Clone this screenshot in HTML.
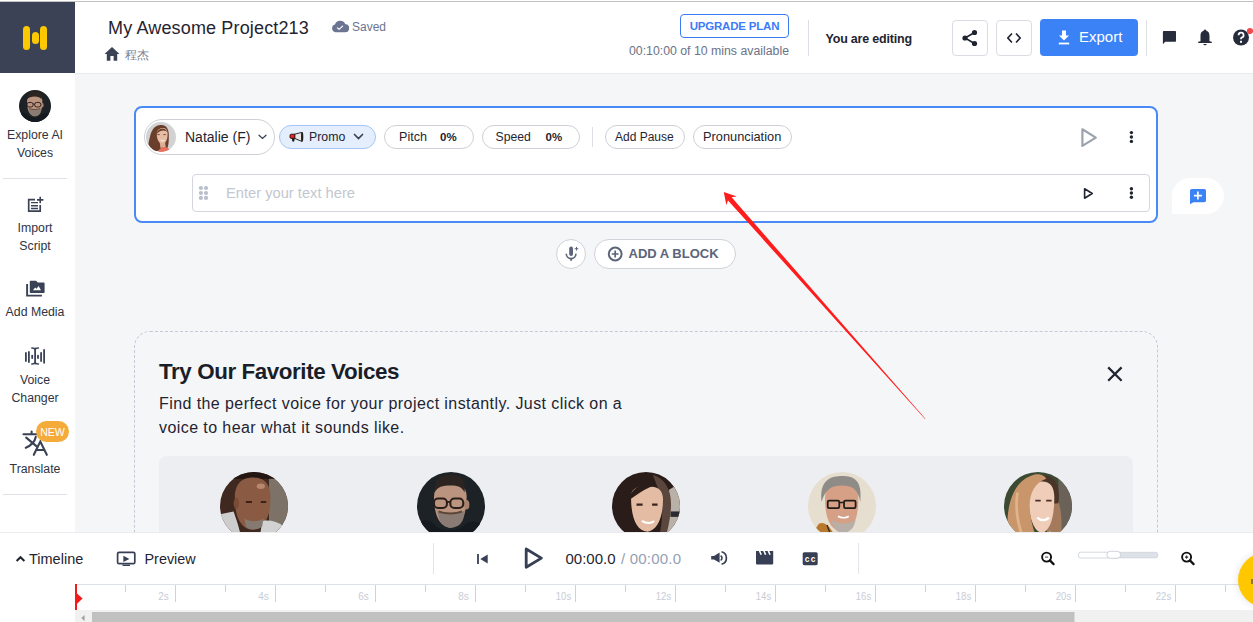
<!DOCTYPE html>
<html><head><meta charset="utf-8">
<style>
*{box-sizing:border-box;margin:0;padding:0}
html,body{width:1253px;height:622px;overflow:hidden;background:#f5f6f8;font-family:"Liberation Sans",sans-serif;color:#1f2430}
.abs{position:absolute}
#topline{position:absolute;left:0;top:0;width:1253px;height:2px;background:#fff}
#topline2{position:absolute;left:0;top:1px;width:1253px;height:1px;background:#c2c2c2;z-index:2}
#logo{position:absolute;left:0;top:2px;width:75px;height:71px;background:#3b4256}
#header{position:absolute;left:75px;top:2px;width:1178px;height:72px;background:#fff;border-bottom:1px solid #ebebed}
#sidebar{position:absolute;left:0;top:73px;width:75px;height:459px;background:#fff}
.sbt{position:absolute;left:0;width:70px;text-align:center;font-size:12.3px;line-height:18px;color:#2f3442}
.div{position:absolute;left:3px;width:64px;height:1px;background:#dfe1e6}
.pill{position:absolute;border:1px solid #cfd2d8;border-radius:14px;background:#fff;font-size:13px;color:#1f2430}
#bottom{position:absolute;left:0;top:532px;width:1253px;height:90px;background:#fff;overflow:hidden}
</style></head><body>
<div id="topline"></div><div id="topline2"></div>
<div id="logo">
  <div class="abs" style="left:23px;top:24px;width:7px;height:24px;border-radius:4px;background:#fcc800"></div>
  <div class="abs" style="left:31.5px;top:30px;width:7px;height:12px;border-radius:4px;background:#fcc800"></div>
  <div class="abs" style="left:40px;top:24px;width:7px;height:24px;border-radius:4px;background:#fcc800"></div>
</div>
<div id="header"></div>
<!-- header content -->
<div class="abs" style="left:108px;top:17px;font-size:18px;line-height:22px;color:#1f2430;letter-spacing:0.15px;white-space:nowrap">My Awesome Project213</div>
<svg class="abs" style="left:331px;top:19px" width="18" height="14" viewBox="0 0 18 14"><path d="M4.5 13.3 A4 4 0 0 1 4 5.5 A5.5 5.5 0 0 1 14.2 5.1 A4.1 4.1 0 0 1 14 13.3 Z" fill="#6b7490"/><path d="M6.4 8.9 L8.1 10.4 L11.6 7.1" stroke="#fff" stroke-width="1.2" fill="none" stroke-linecap="round" stroke-linejoin="round"/></svg>
<div class="abs" style="left:352px;top:20px;font-size:12px;line-height:15px;color:#6b7490">Saved</div>
<svg class="abs" style="left:104px;top:47px" width="16" height="14" viewBox="0 0 16 14"><path d="M8 0 L15.5 7 L13.2 7 L13.2 13.8 L9.6 13.8 L9.6 9 L6.4 9 L6.4 13.8 L2.8 13.8 L2.8 7 L0.5 7 Z" fill="#3a4255"/></svg>
<div class="abs" style="left:125px;top:48px;font-size:12px;line-height:15px;color:#7c8598">程杰</div>
<div class="abs" style="left:680px;top:14px;width:109px;height:24px;border:1px solid #3b7cf5;border-radius:4px;color:#3b7cf5;font-size:11.5px;font-weight:700;line-height:22px;text-align:center;letter-spacing:-0.2px">UPGRADE PLAN</div>
<div class="abs" style="left:629px;top:44px;font-size:12.3px;line-height:14px;color:#6b7386;white-space:nowrap">00:10:00 of 10 mins available</div>
<div class="abs" style="left:808px;top:20px;width:1px;height:36px;background:#dcdfe4"></div>
<div class="abs" style="left:825.5px;top:31.5px;font-size:12.5px;font-weight:700;line-height:15px;color:#1f2430;white-space:nowrap;letter-spacing:-0.2px">You are editing</div>
<div class="abs" style="left:952px;top:20px;width:36px;height:36px;border:1px solid #d9dce2;border-radius:4px;background:#fff"></div>
<svg class="abs" style="left:961px;top:29px" width="18" height="18" viewBox="0 0 18 18"><circle cx="13.5" cy="3.5" r="2.6" fill="#1f2430"/><circle cx="4" cy="9" r="2.6" fill="#1f2430"/><circle cx="13.5" cy="14.5" r="2.6" fill="#1f2430"/><path d="M13.5 3.5 L4 9 L13.5 14.5" stroke="#1f2430" stroke-width="1.6" fill="none"/></svg>
<div class="abs" style="left:996px;top:20px;width:36px;height:36px;border:1px solid #d9dce2;border-radius:4px;background:#fff"></div>
<svg class="abs" style="left:1006px;top:31px" width="16" height="14" viewBox="0 0 16 14"><path d="M5.5 3 L1.8 7 L5.5 11 M10.5 3 L14.2 7 L10.5 11" stroke="#1f2430" stroke-width="1.7" fill="none" stroke-linecap="round" stroke-linejoin="round"/></svg>
<div class="abs" style="left:1040px;top:19px;width:98px;height:37px;border-radius:4px;background:#3a82f6"></div>
<svg class="abs" style="left:1058px;top:30px" width="12" height="15" viewBox="0 0 12 15"><path d="M4 0.5 H8 V5.5 H11 L6 10.5 L1 5.5 H4 Z" fill="#fff"/><rect x="0.8" y="12.6" width="10.4" height="1.8" fill="#fff"/></svg>
<div class="abs" style="left:1079px;top:28px;font-size:15px;line-height:18px;color:#fff">Export</div>
<div class="abs" style="left:1146px;top:20px;width:1px;height:36px;background:#dcdfe4"></div>
<svg class="abs" style="left:1162px;top:30px" width="15" height="15" viewBox="0 0 15 15"><path d="M1.8 1 H13.2 Q14 1 14 1.8 V10.9 Q14 11.7 13.2 11.7 H3.2 L0.9 14.3 V1.8 Q0.9 1 1.8 1 Z" fill="#262c3b"/></svg>
<svg class="abs" style="left:1197px;top:29px" width="16" height="18" viewBox="0 0 16 18"><circle cx="8" cy="1.6" r="1.1" fill="#262c3b"/><path d="M8 1.6 C5 1.6 3.5 4 3.5 7 V12.2 L1.2 12.8 V13.9 H14.8 V12.8 L12.5 12.2 V7 C12.5 4 11 1.6 8 1.6 Z" fill="#262c3b"/><path d="M5.8 15 H10.2 L8 16.6 Z" fill="#262c3b"/></svg>
<svg class="abs" style="left:1232px;top:27px" width="21" height="19" viewBox="0 0 21 19"><circle cx="9" cy="10.5" r="8" fill="#262c3b"/><path d="M6.6 8.2 A2.5 2.5 0 1 1 9.5 10.6 C9 10.9 9 11.4 9 12.3" stroke="#fff" stroke-width="1.8" fill="none" stroke-linecap="butt"/><rect x="8" y="13.8" width="2" height="2" fill="#fff"/><circle cx="18" cy="4" r="3.1" fill="#f4484a"/></svg>
<div id="sidebar"></div>
<!-- sidebar -->
<svg class="abs" style="left:19px;top:90px" width="32" height="32" viewBox="-50 -50 100 100"><defs><clipPath id="avglasses35"><circle r="50"/></clipPath></defs><g clip-path="url(#avglasses35)"><rect x="-50" y="-50" width="100" height="100" fill="#1c2225"/><path d="M-25 -14 C-25 -30 -12 -34 -1 -34 C14 -34 23 -28 23 -14 C23 12 16 30 -1 32 C-18 30 -25 12 -25 -14Z" fill="#bb9480"/><path d="M-24 -20 C-26 -42 -12 -46 -1 -46 C16 -46 22 -40 20 -20 C16 -28 10 -30 -1 -30 C-12 -30 -20 -28 -24 -20Z" fill="#2b2421"/><ellipse cx="23" cy="-2" rx="4" ry="7" fill="#a88470"/><path d="M-20 6 C-18 28 -8 32 -1 32 C10 32 20 26 20 6 C12 14 -12 14 -20 6Z" fill="#8a7c74"/><path d="M-18 8 C-10 12 8 12 16 8" stroke="#5a4638" stroke-width="3" fill="none"/><path d="M-50 50 L-46 24 C-38 18 -28 22 -22 30 C-12 38 10 38 20 28 C28 20 40 22 46 28 L50 50Z" fill="#141a1f"/><rect x="-25" y="-11" width="19" height="14" rx="6" fill="none" stroke="#2a1e1a" stroke-width="3"/><rect x="-1" y="-11" width="19" height="14" rx="6" fill="none" stroke="#2a1e1a" stroke-width="3"/><path d="M-6 -6 H-1" stroke="#2a1e1a" stroke-width="2.5"/></g></svg>
<div class="sbt" style="top:126px">Explore AI<br>Voices</div>
<div class="div" style="top:178px"></div>
<svg class="abs" style="left:20px;top:190px" width="30" height="26" viewBox="20 190 30 26"><g stroke="#3a4255" fill="none" stroke-width="1.7"><path d="M35 199.6 H28.7 V211.2 H40.2 V205"/><path d="M37 199.9 H43.4 M40.2 196.7 V203.3" stroke-width="1.6"/><path d="M31 202.6 H38 M31 205.7 H38 M31 208.5 H38" stroke-width="1.4"/></g></svg>
<div class="sbt" style="top:219px">Import<br>Script</div>
<svg class="abs" style="left:20px;top:276px" width="30" height="24" viewBox="20 276 30 24"><path d="M27.1 284.1 V295.6 H41.9" stroke="#3a4255" stroke-width="1.9" fill="none"/><path d="M29.8 281.6 Q29.8 280.8 30.6 280.8 H36 L37.8 282.6 H43.8 Q44.6 282.6 44.6 283.4 V292.2 Q44.6 293 43.8 293 H30.6 Q29.8 293 29.8 292.2 Z" fill="#3a4255"/><path d="M32.9 290.2 L35.2 287.6 L36.6 288.8 L38.6 286 L41 290.2 Z" fill="#fff"/></svg>
<div class="sbt" style="top:303px">Add Media</div>
<svg class="abs" style="left:20px;top:344px" width="30" height="24" viewBox="20 344 30 24"><g stroke="#3a4255" stroke-width="1.8" fill="none" stroke-linecap="round"><path d="M25.9 352.8 V361"/><path d="M28.9 352 V362"/><path d="M32.2 355.6 V358"/><path d="M38 355.6 V358"/><path d="M41.1 352.8 V361"/><path d="M44.1 350 V362.8"/><path d="M35.1 348.5 V363.5"/><path d="M31.8 348 Q35.1 348 35.1 350 Q35.1 348 38.4 348 M31.8 364 Q35.1 364 35.1 362 Q35.1 364 38.4 364" stroke-width="1.5"/></g></svg>
<div class="sbt" style="top:371px">Voice<br>Changer</div>
<svg class="abs" style="left:20px;top:428px" width="32" height="30" viewBox="20 428 32 30"><g stroke="#3a4255" stroke-width="2.1" fill="none" stroke-linecap="round"><path d="M23.5 434.3 H37.5 M31.6 431.6 V434.3"/><path d="M35.8 436.8 C35 441 31 445.5 25.8 447.8"/><path d="M26.2 437.6 L37 446.6"/><path d="M33.8 454.8 L40.3 441.6 L46.8 454.8 M36 450 H44.6"/></g></svg>
<div class="abs" style="left:36px;top:421px;width:33px;height:21px;border-radius:11px;background:#f5ab3a;color:#fff;font-size:10.6px;line-height:22.5px;text-align:center">NEW</div>
<div class="sbt" style="top:460px">Translate</div>
<div class="div" style="top:494px"></div>
<!-- block card -->
<div class="abs" style="left:134px;top:106px;width:1024px;height:117px;border:2px solid #4a8af4;border-radius:8px;background:#fff"></div>
<div class="abs" style="left:144px;top:119px;width:131px;height:36px;border:1px solid #cdd0d6;border-radius:18px;background:#fff"></div>
<svg class="abs" style="left:145.8px;top:122px" width="30" height="30" viewBox="-50 -50 100 100"><defs><clipPath id="avnatalie160"><circle r="50"/></clipPath></defs><g clip-path="url(#avnatalie160)"><rect x="-50" y="-50" width="100" height="100" fill="#d2d2d4"/><path d="M-42 24 C-36 0 -34 -38 -2 -40 C22 -42 28 -20 26 4 C26 20 24 32 20 40 L-20 48 C-30 40 -38 34 -42 24Z" fill="#6a3e2a"/><path d="M-14 -10 C-14 -26 -2 -30 6 -30 C18 -30 22 -22 22 -8 C22 12 14 22 5 24 C-6 22 -14 10 -14 -10Z" fill="#e6bda4"/><path d="M-16 -8 C-10 -32 12 -36 24 -14 C14 -24 -2 -26 -16 -8Z" fill="#6a3e2a"/><path d="M-4 20 L14 20 L16 36 L-2 36Z" fill="#dcae94"/><path d="M-10 50 C-6 38 2 34 10 34 C22 34 28 38 30 50Z" fill="#e8705c"/><path d="M-12 -8 H-4 M8 -8 H16" stroke="#4a2a20" stroke-width="2.5"/><path d="M-1 10 C3 14 9 14 12 10" stroke="#fff" stroke-width="3" fill="none"/></g></svg>
<div class="abs" style="left:185px;top:128px;font-size:14px;line-height:18px;color:#1f2430;white-space:nowrap">Natalie (F)</div>
<svg class="abs" style="left:257px;top:132px" width="11" height="8" viewBox="0 0 11 8"><path d="M2 3.2 L5.5 6.4 L9 3.2" stroke="#3a4255" stroke-width="1.3" fill="none" stroke-linecap="round"/></svg>
<div class="abs" style="left:279px;top:125px;width:97px;height:24px;border:1px solid #a7c6f4;border-radius:12px;background:#e4eefc"></div>
<div class="abs" style="left:309px;top:129px;font-size:12.3px;line-height:16px;color:#1f2430">Promo</div>
<svg class="abs" style="left:353px;top:133px" width="11" height="8" viewBox="0 0 11 8"><path d="M1.5 1.5 L5.5 5.5 L9.5 1.5" stroke="#3a4255" stroke-width="1.7" fill="none" stroke-linecap="round"/></svg>
<div class="abs" style="left:384px;top:125px;width:90px;height:24px;border:1px solid #cdd0d6;border-radius:12px;background:#fff"></div>
<div class="abs" style="left:399px;top:129px;font-size:12.6px;line-height:16px;color:#1f2430">Pitch</div>
<div class="abs" style="left:440px;top:129px;font-size:11.5px;font-weight:700;line-height:16px;color:#1f2430">0%</div>
<div class="abs" style="left:482px;top:125px;width:98px;height:24px;border:1px solid #cdd0d6;border-radius:12px;background:#fff"></div>
<div class="abs" style="left:495.5px;top:129px;font-size:12.2px;line-height:16px;color:#1f2430">Speed</div>
<div class="abs" style="left:545.5px;top:129px;font-size:11.5px;font-weight:700;line-height:16px;color:#1f2430">0%</div>
<div class="abs" style="left:592px;top:127px;width:1px;height:20px;background:#dcdfe4"></div>
<div class="abs" style="left:605px;top:125px;width:80px;height:24px;border:1px solid #cdd0d6;border-radius:12px;background:#fff"></div>
<div class="abs" style="left:615px;top:129px;font-size:12px;line-height:16px;color:#1f2430">Add Pause</div>
<div class="abs" style="left:693px;top:125px;width:99px;height:24px;border:1px solid #cdd0d6;border-radius:12px;background:#fff"></div>
<div class="abs" style="left:703px;top:129px;font-size:12.8px;line-height:16px;color:#1f2430">Pronunciation</div>
<div class="abs" style="left:192px;top:174px;width:958px;height:38px;border:1px solid #d3d6dc;border-radius:4px;background:#fff"></div>
<div class="abs" style="left:226px;top:184px;font-size:14.7px;line-height:18px;color:#c3c7cf;white-space:nowrap">Enter your text here</div>
<!-- floating add -->
<div class="abs" style="left:1172px;top:178px;width:52px;height:36px;border-radius:18px 18px 18px 2px;background:#fff"></div>
<svg class="abs" style="left:0;top:0" width="1253" height="622" viewBox="0 0 1253 622">
 <!-- megaphone -->
 <path d="M294.6 134.2 L301.8 132.4 V141.4 L294.6 138.4 Z" fill="#e6e6e6" stroke="#151515" stroke-width="0.9" stroke-linejoin="round"/>
 <path d="M291.2 134.2 H294.8 V138.4 H291.2 Q290 138.4 290 137.2 V135.4 Q290 134.2 291.2 134.2 Z" fill="#f41c1c" stroke="#151515" stroke-width="0.9"/>
 <path d="M292 138.2 H294.6 L294.4 140.8 Q294 141.8 293 141.6 Q292.2 141.4 292.1 140.4 Z" fill="#1a1a1a"/>
 <ellipse cx="302.2" cy="136.9" rx="1.1" ry="4.8" fill="#1e1e1e"/>
 <!-- big play + kebab -->
 <path d="M1082.4 129.3 L1095.8 137.6 L1082.4 145.9 Z" fill="none" stroke="#9ca3af" stroke-width="2.2" stroke-linejoin="round"/>
 <circle cx="1131.4" cy="132.6" r="1.7" fill="#1f2430"/><circle cx="1131.4" cy="137" r="1.7" fill="#1f2430"/><circle cx="1131.4" cy="141.4" r="1.7" fill="#1f2430"/>
 <!-- small play + kebab -->
 <path d="M1084.6 188.8 L1092.2 193.5 L1084.6 198.2 Z" fill="none" stroke="#1f2430" stroke-width="1.6" stroke-linejoin="round"/>
 <circle cx="1131.4" cy="188.7" r="1.7" fill="#1f2430"/><circle cx="1131.4" cy="193" r="1.7" fill="#1f2430"/><circle cx="1131.4" cy="197.3" r="1.7" fill="#1f2430"/>
 <!-- drag dots -->
 <g fill="#b9c0cc"><circle cx="200.9" cy="188" r="2.1"/><circle cx="206" cy="188" r="2.1"/><circle cx="200.9" cy="193" r="2.1"/><circle cx="206" cy="193" r="2.1"/><circle cx="200.9" cy="197.9" r="2.1"/><circle cx="206" cy="197.9" r="2.1"/></g>
 <!-- floating add icon -->
 <path d="M1191.8 189 H1204.2 Q1206 189 1206 190.8 V200.4 Q1206 202.2 1204.2 202.2 H1193.4 L1190 204.2 V190.8 Q1190 189 1191.8 189 Z" fill="#3a82f6"/>
 <path d="M1197.9 191.6 V199.6 M1193.9 195.6 H1201.9" stroke="#fff" stroke-width="1.7"/>
</svg>
<!-- add a block -->
<div class="abs" style="left:556px;top:239px;width:30px;height:30px;border:1px solid #cfd2d8;border-radius:15px;background:#fff"></div>
<svg class="abs" style="left:556px;top:239px" width="30" height="30" viewBox="556 239 30 30"><rect x="569.2" y="246.6" width="3.8" height="9.4" rx="1.9" fill="#5b6478"/><path d="M566.3 253.8 A4.8 4.8 0 0 0 575.9 253.8" fill="none" stroke="#5b6478" stroke-width="1.6"/><path d="M571.1 258.6 V260.8" stroke="#5b6478" stroke-width="1.8"/><path d="M576.5 246.9 V250.5 M574.7 248.7 H578.3" stroke="#5b6478" stroke-width="1"/></svg>
<div class="abs" style="left:594px;top:239px;width:142px;height:30px;border:1px solid #cfd2d8;border-radius:15px;background:#fff"></div>
<svg class="abs" style="left:605px;top:244px" width="20" height="20" viewBox="605 244 20 20"><circle cx="615.2" cy="254" r="6.4" fill="none" stroke="#5b6478" stroke-width="2"/><path d="M615.2 250.6 V257.4 M611.8 254 H618.6" stroke="#5b6478" stroke-width="1.7"/></svg>
<div class="abs" style="left:628.5px;top:246px;font-size:13px;font-weight:700;line-height:16px;color:#5b6478;white-space:nowrap;letter-spacing:0px">ADD A BLOCK</div>
<!-- favorite voices -->
<div class="abs" style="left:134px;top:331px;width:1024px;height:230px;border:1px dashed #c5c9d3;border-radius:16px"></div>
<div class="abs" style="left:159px;top:359px;font-size:22.4px;font-weight:700;line-height:26px;color:#1a1e29;white-space:nowrap;letter-spacing:-0.42px">Try Our Favorite Voices</div>
<div class="abs" style="left:159px;top:392px;font-size:16px;line-height:24px;color:#1f2430;white-space:nowrap;letter-spacing:0.42px">Find the perfect voice for your project instantly. Just click on a<br>voice to hear what it sounds like.</div>
<svg class="abs" style="left:1105px;top:364px" width="20" height="20" viewBox="1105 364 20 20"><path d="M1108.2 367.4 L1121.6 380.8 M1121.6 367.4 L1108.2 380.8" stroke="#1f2430" stroke-width="2.2"/></svg>
<div class="abs" style="left:159px;top:456px;width:974px;height:100px;border-radius:8px;background:#edeef2"></div>
<svg class="abs" style="left:220px;top:471.5px" width="68" height="68" viewBox="-50 -50 100 100"><defs><clipPath id="avbald254"><circle r="50"/></clipPath></defs><g clip-path="url(#avbald254)"><rect x="-50" y="-50" width="100" height="100" fill="#3e2820"/><path d="M22 -50 H50 V50 H22Z" fill="#7c7268"/><rect x="-50" y="-50" width="100" height="10" fill="#241612"/><path d="M-28 -8 C-30 -36 -14 -42 -2 -42 C14 -42 26 -34 24 -8 C24 14 16 34 -4 35 C-20 33 -28 14 -28 -8Z" fill="#8a5a42"/><ellipse cx="10" cy="-29" rx="6" ry="4" fill="#c2927a" opacity="0.8"/><ellipse cx="-26" cy="-4" rx="4" ry="8" fill="#7a4c36"/><path d="M-50 12 L-30 8 C-26 20 -22 30 -18 50 L-50 50Z" fill="#cdcdcd"/><path d="M12 22 C22 20 34 22 44 30 L50 50 L8 50Z" fill="#d2d2d2"/><path d="M-12 -6 H-3 M10 -6 H18" stroke="#3a2016" stroke-width="3"/><path d="M-14 18 C-8 24 8 24 14 18 L12 30 C6 36 -8 36 -12 30Z" fill="#857a72"/></g></svg>
<svg class="abs" style="left:416.5px;top:471.5px" width="68" height="68" viewBox="-50 -50 100 100"><defs><clipPath id="avglasses450"><circle r="50"/></clipPath></defs><g clip-path="url(#avglasses450)"><rect x="-50" y="-50" width="100" height="100" fill="#1c2225"/><path d="M-25 -14 C-25 -30 -12 -34 -1 -34 C14 -34 23 -28 23 -14 C23 12 16 30 -1 32 C-18 30 -25 12 -25 -14Z" fill="#bb9480"/><path d="M-24 -20 C-26 -42 -12 -46 -1 -46 C16 -46 22 -40 20 -20 C16 -28 10 -30 -1 -30 C-12 -30 -20 -28 -24 -20Z" fill="#2b2421"/><ellipse cx="23" cy="-2" rx="4" ry="7" fill="#a88470"/><path d="M-20 6 C-18 28 -8 32 -1 32 C10 32 20 26 20 6 C12 14 -12 14 -20 6Z" fill="#8a7c74"/><path d="M-18 8 C-10 12 8 12 16 8" stroke="#5a4638" stroke-width="3" fill="none"/><path d="M-50 50 L-46 24 C-38 18 -28 22 -22 30 C-12 38 10 38 20 28 C28 20 40 22 46 28 L50 50Z" fill="#141a1f"/><rect x="-25" y="-11" width="19" height="14" rx="6" fill="none" stroke="#2a1e1a" stroke-width="3"/><rect x="-1" y="-11" width="19" height="14" rx="6" fill="none" stroke="#2a1e1a" stroke-width="3"/><path d="M-6 -6 H-1" stroke="#2a1e1a" stroke-width="2.5"/></g></svg>
<svg class="abs" style="left:612px;top:471.5px" width="68" height="68" viewBox="-50 -50 100 100"><defs><clipPath id="avwoman_dark646"><circle r="50"/></clipPath></defs><g clip-path="url(#avwoman_dark646)"><rect x="-50" y="-50" width="100" height="100" fill="#2a1c18"/><path d="M34 -24 L50 -34 V50 H30Z" fill="#b9b0a8"/><rect x="36" y="8" width="14" height="8" fill="#2a2a30"/><path d="M10 -46 C30 -40 40 -20 36 10 C34 30 30 40 28 50 H18 C26 20 26 -10 16 -30Z" fill="#5a463c"/><path d="M-22 -14 C-22 -28 -8 -30 4 -28 C18 -30 25 -22 25 -10 C25 18 16 36 2 38 C-14 36 -22 18 -22 -14Z" fill="#e4bca4"/><path d="M-26 -8 C-22 -28 -4 -34 12 -30 C-4 -24 -14 -16 -26 -8Z" fill="#2a1c18"/><path d="M-14 -2 H-5 M9 -2 H17" stroke="#3a2420" stroke-width="3"/><path d="M-6 22 C0 26 8 26 12 22" stroke="#fff" stroke-width="3" fill="none"/><path d="M18 42 L40 36 L50 50 H14Z" fill="#c8c4c0"/></g></svg>
<svg class="abs" style="left:808px;top:471.5px" width="68" height="68" viewBox="-50 -50 100 100"><defs><clipPath id="avolder842"><circle r="50"/></clipPath></defs><g clip-path="url(#avolder842)"><rect x="-50" y="-50" width="100" height="100" fill="#e6dece"/><path d="M-50 50 L-34 26 C-26 22 -16 30 -8 50Z" fill="#b8782e"/><path d="M-22 28 L-14 50" stroke="#3a2a1a" stroke-width="2"/><path d="M-25 -10 C-25 -32 -12 -38 0 -38 C14 -38 24 -32 24 -10 C24 16 18 36 0 38 C-18 36 -25 16 -25 -10Z" fill="#d5a086"/><path d="M-30 -6 C-34 -40 -14 -44 0 -44 C18 -44 30 -38 27 -6 C23 -26 14 -30 0 -30 C-14 -30 -24 -26 -30 -6Z" fill="#8f8c88"/><path d="M-16 20 C-12 36 -4 40 0 40 C10 40 18 34 20 20 C12 28 -8 28 -16 20Z" fill="#b8b0a8"/><rect x="-21" y="-8" width="17" height="11" rx="2" fill="none" stroke="#221c18" stroke-width="2.6"/><rect x="3" y="-8" width="17" height="11" rx="2" fill="none" stroke="#221c18" stroke-width="2.6"/><path d="M-4 -5 H3" stroke="#221c18" stroke-width="2.2"/><path d="M-6 15 C-1 18 6 18 10 15" stroke="#fff" stroke-width="2.5" fill="none"/></g></svg>
<svg class="abs" style="left:1004px;top:471.5px" width="68" height="68" viewBox="-50 -50 100 100"><defs><clipPath id="avwoman_blonde1038"><circle r="50"/></clipPath></defs><g clip-path="url(#avwoman_blonde1038)"><rect x="-50" y="-50" width="100" height="100" fill="#3c4a34"/><path d="M30 -50 H50 V50 H30Z" fill="#6a6258"/><path d="M24 -20 C34 -6 36 20 34 50 H12 L16 0Z" fill="#a47a5c"/><path d="M-20 -30 C-14 -46 10 -50 22 -40 C30 -32 32 -20 30 -4 L-20 0Z" fill="#4a3428"/><path d="M-14 -12 C-14 -32 -2 -36 6 -36 C18 -36 24 -28 24 -12 C24 16 18 36 6 40 C-6 38 -14 16 -14 -12Z" fill="#efcdb8"/><path d="M-8 36 C-2 42 12 44 18 36 L20 50 H-8Z" fill="#e6bca4"/><path d="M-44 50 C-48 10 -42 -36 -6 -46 C4 -48 10 -44 12 -40 C-6 -34 -14 -16 -12 6 C-10 24 -6 40 0 50Z" fill="#c9966c"/><path d="M-30 -20 C-34 0 -30 30 -20 50" stroke="#e0b48a" stroke-width="4" fill="none"/><path d="M-4 -8 H4 M12 -8 H20" stroke="#4a3028" stroke-width="2.5"/><path d="M-1 17 C4 22 12 22 16 17" stroke="#fff" stroke-width="3.5" fill="none"/></g></svg>
<svg class="abs" style="left:0;top:0;z-index:3" width="1253" height="622" viewBox="0 0 1253 622"><path d="M723.8 192.1 L736.7 196.5 L731.6 197.2 L925.4 418.7 L925.0 419.1 L728.0 200.4 L726.3 204.9 Z" fill="#ff1c1c"/></svg>
<div id="bottom">
<svg class="abs" style="left:0;top:0" width="1253" height="90" viewBox="0 532 1253 90">
 <rect x="0" y="532" width="1253" height="1" fill="#e9ebef"/>
 <path d="M16.6 561 L20.5 557.2 L24.4 561" fill="none" stroke="#1f2430" stroke-width="2"/>
 <rect x="117.6" y="552.3" width="17.2" height="11.4" rx="1.5" fill="none" stroke="#373f54" stroke-width="1.7"/>
 <rect x="122.5" y="564.6" width="7.5" height="1.4" fill="#373f54"/>
 <path d="M123.4 555.7 L129.4 558.9 L123.4 562.1 Z" fill="#373f54"/>
 <rect x="433" y="543" width="1" height="31" fill="#e3e5ea"/>
 <rect x="858" y="543" width="1" height="31" fill="#e3e5ea"/>
 <rect x="477.1" y="554" width="1.8" height="10" fill="#373f54"/>
 <path d="M487.7 554.6 V563.4 L480.3 559 Z" fill="#373f54"/>
 <path d="M526.2 549 L541.4 558.1 L526.2 567.2 Z" fill="none" stroke="#373f54" stroke-width="2.8" stroke-linejoin="round"/>
 <path d="M711.2 556 H714 L719.6 552.4 V562.8 L714 559.6 H711.2 Z" fill="#373f54"/>
 <path d="M720.6 555.8 A2.6 2.6 0 0 1 720.6 560.4" fill="none" stroke="#373f54" stroke-width="1.6"/>
 <path d="M721.6 551.8 A6.4 6.4 0 0 1 721.6 564.2" fill="none" stroke="#373f54" stroke-width="1.7"/>
 <path d="M756 551 H773.2 V563.6 Q773.2 564.4 772.4 564.4 H756.8 Q756 564.4 756 563.6 Z" fill="#373f54"/>
 <path d="M759.4 550.5 L761.2 554.8 M763.8 550.5 L765.6 554.8 M768.2 550.5 L770 554.8" stroke="#fff" stroke-width="1.6"/>
 <rect x="802.7" y="552.2" width="15" height="13" rx="1.6" fill="#373f54"/>
 <text x="807" y="562" text-anchor="middle" font-family="Liberation Sans" font-weight="700" font-size="8.4" fill="#fff">c</text><text x="813.2" y="562" text-anchor="middle" font-family="Liberation Sans" font-weight="700" font-size="8.4" fill="#fff">c</text>
 <circle cx="1046.6" cy="557.1" r="4.5" fill="none" stroke="#111" stroke-width="1.9"/>
 <path d="M1049.9 560.4 L1053.6 564.1" stroke="#111" stroke-width="2.2" stroke-linecap="round"/>
 <path d="M1045 557.1 H1048.2" stroke="#555" stroke-width="1.1"/>
 <rect x="1078.5" y="552.3" width="79.3" height="5.6" rx="2" fill="#dde1e8" stroke="#c9ced6" stroke-width="0.6"/>
 <rect x="1078.5" y="552.3" width="30" height="5.6" rx="2" fill="#fff" stroke="#c9ced6" stroke-width="0.6"/>
 <rect x="1106.8" y="551.3" width="13.8" height="7" rx="3.5" fill="#fff" stroke="#c3c8d0" stroke-width="0.8"/>
 <circle cx="1186.6" cy="557.1" r="4.5" fill="none" stroke="#111" stroke-width="1.9"/>
 <path d="M1189.9 560.4 L1193.6 564.1" stroke="#111" stroke-width="2.2" stroke-linecap="round"/>
 <path d="M1185 557.1 H1188.2 M1186.6 555.4 V558.8" stroke="#333" stroke-width="1.1"/>
 <rect x="75" y="584" width="1178" height="1" fill="#dde1e9"/>
 <rect x="125" y="585" width="1" height="7" fill="#cdd2db"/><rect x="175" y="585" width="1" height="17" fill="#cdd2db"/><rect x="225" y="585" width="1" height="7" fill="#cdd2db"/><rect x="275" y="585" width="1" height="17" fill="#cdd2db"/><rect x="325" y="585" width="1" height="7" fill="#cdd2db"/><rect x="375" y="585" width="1" height="17" fill="#cdd2db"/><rect x="425" y="585" width="1" height="7" fill="#cdd2db"/><rect x="475" y="585" width="1" height="17" fill="#cdd2db"/><rect x="525" y="585" width="1" height="7" fill="#cdd2db"/><rect x="575" y="585" width="1" height="17" fill="#cdd2db"/><rect x="625" y="585" width="1" height="7" fill="#cdd2db"/><rect x="675" y="585" width="1" height="17" fill="#cdd2db"/><rect x="725" y="585" width="1" height="7" fill="#cdd2db"/><rect x="775" y="585" width="1" height="17" fill="#cdd2db"/><rect x="825" y="585" width="1" height="7" fill="#cdd2db"/><rect x="875" y="585" width="1" height="17" fill="#cdd2db"/><rect x="925" y="585" width="1" height="7" fill="#cdd2db"/><rect x="975" y="585" width="1" height="17" fill="#cdd2db"/><rect x="1025" y="585" width="1" height="7" fill="#cdd2db"/><rect x="1075" y="585" width="1" height="17" fill="#cdd2db"/><rect x="1125" y="585" width="1" height="7" fill="#cdd2db"/><rect x="1175" y="585" width="1" height="17" fill="#cdd2db"/><rect x="1225" y="585" width="1" height="7" fill="#cdd2db"/>
 <g font-family="Liberation Sans" font-size="11" fill="#c7ccd6"><text x="163.5" y="599.8" text-anchor="middle" textLength="10.5" lengthAdjust="spacingAndGlyphs">2s</text><text x="263.5" y="599.8" text-anchor="middle" textLength="10.5" lengthAdjust="spacingAndGlyphs">4s</text><text x="363.5" y="599.8" text-anchor="middle" textLength="10.5" lengthAdjust="spacingAndGlyphs">6s</text><text x="463.5" y="599.8" text-anchor="middle" textLength="10.5" lengthAdjust="spacingAndGlyphs">8s</text><text x="563.5" y="599.8" text-anchor="middle" textLength="15.3" lengthAdjust="spacingAndGlyphs">10s</text><text x="663.5" y="599.8" text-anchor="middle" textLength="15.3" lengthAdjust="spacingAndGlyphs">12s</text><text x="763.5" y="599.8" text-anchor="middle" textLength="15.3" lengthAdjust="spacingAndGlyphs">14s</text><text x="863.5" y="599.8" text-anchor="middle" textLength="15.3" lengthAdjust="spacingAndGlyphs">16s</text><text x="963.5" y="599.8" text-anchor="middle" textLength="15.3" lengthAdjust="spacingAndGlyphs">18s</text><text x="1063.5" y="599.8" text-anchor="middle" textLength="15.3" lengthAdjust="spacingAndGlyphs">20s</text><text x="1163.5" y="599.8" text-anchor="middle" textLength="15.3" lengthAdjust="spacingAndGlyphs">22s</text></g>
 <rect x="75" y="610" width="1178" height="12" fill="#f1f1f1"/>
 <rect x="92" y="612" width="982.5" height="10" fill="#c1c1c1"/>
 <path d="M84.6 615 V621 L81.2 618 Z" fill="#a3a3a3"/>
 <rect x="75" y="584" width="2" height="26" fill="#f51a1a"/>
 <path d="M76.5 593 L82.6 598.6 L76.5 604.3 Z" fill="#f51a1a"/>
</svg>
<div class="abs" style="left:29px;top:18px;font-size:14.5px;line-height:18px;color:#1f2430">Timeline</div>
<div class="abs" style="left:144.5px;top:18px;font-size:14.4px;line-height:18px;color:#1f2430">Preview</div>
<div class="abs" style="left:565.5px;top:17.5px;font-size:15px;line-height:18px;color:#1f2430;white-space:nowrap">00:00.0</div><div class="abs" style="left:621px;top:17.5px;font-size:15px;line-height:18px;color:#94a0b4;white-space:nowrap;letter-spacing:0.2px">/ 00:00.0</div>
<div class="abs" style="left:1237.5px;top:21px;width:54px;height:54px;border-radius:27px;background:#fec700;box-shadow:0 0 8px rgba(0,0,0,0.12)"></div><div class="abs" style="left:1251px;top:47px;width:2px;height:5px;background:#8a7a40"></div>
</div>
</body></html>
